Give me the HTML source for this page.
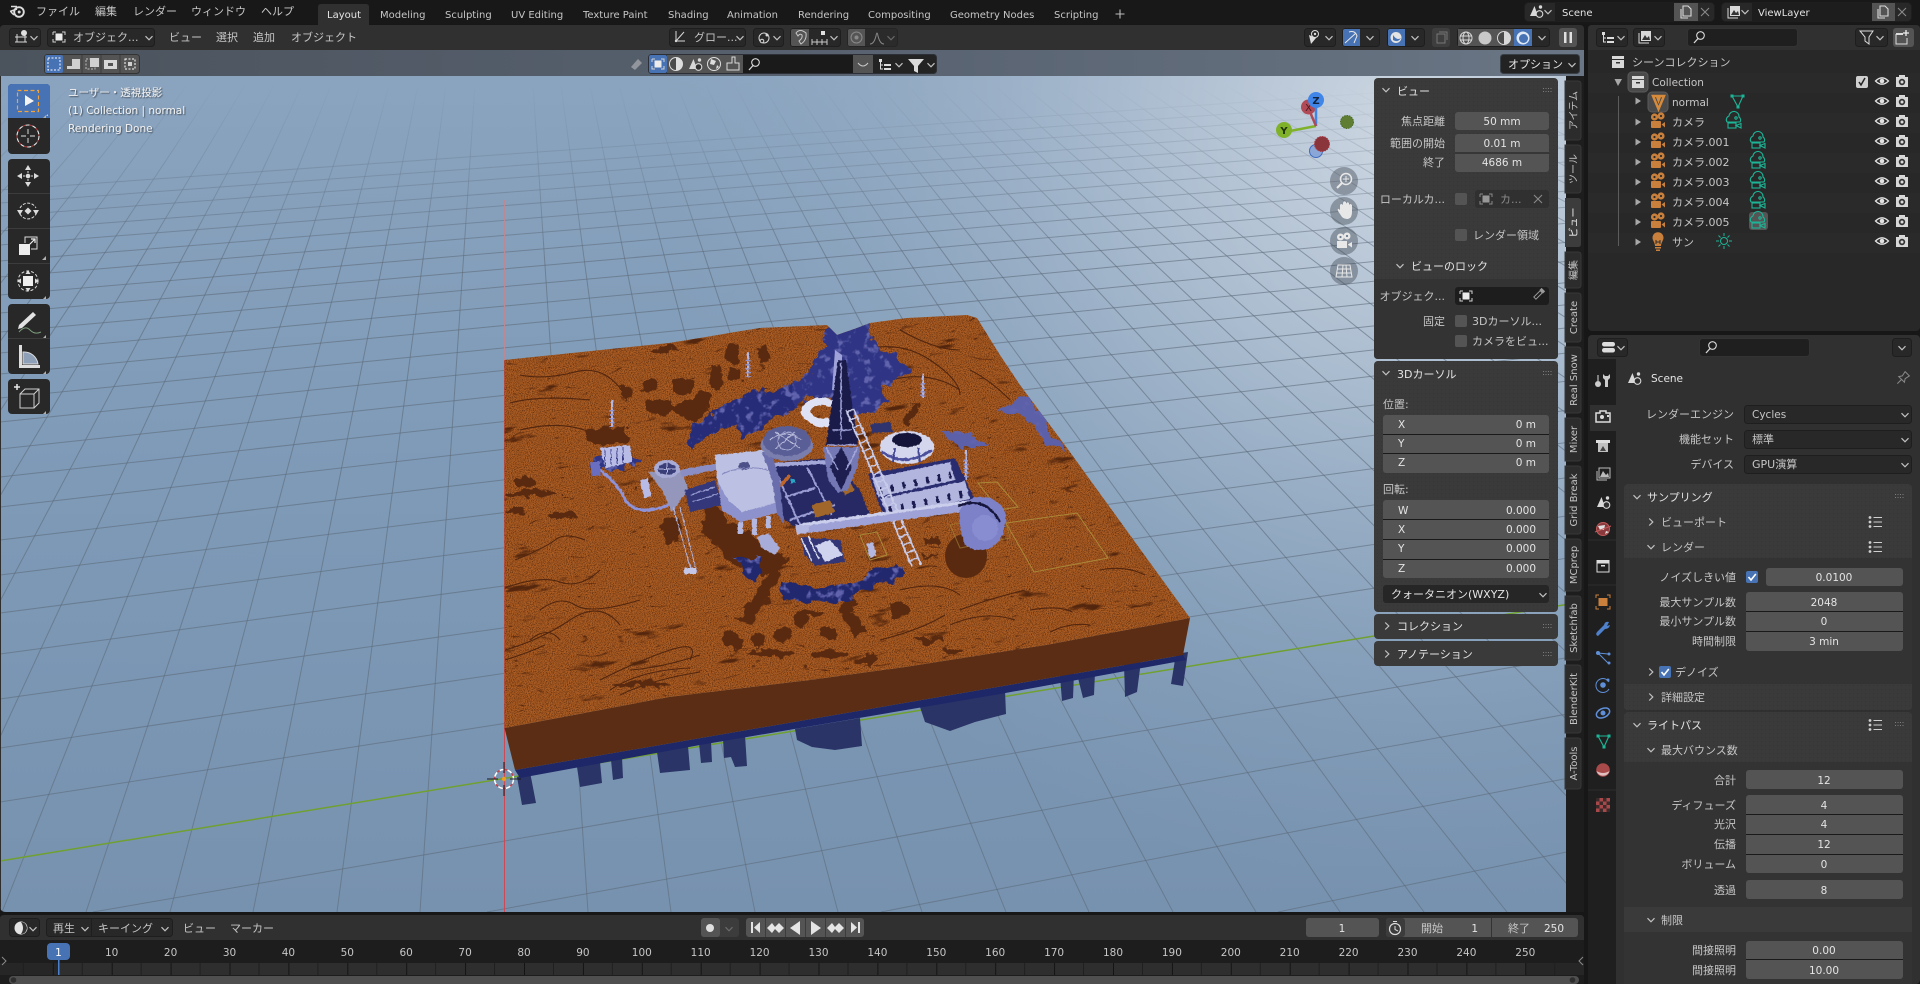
<!DOCTYPE html>
<html><head><meta charset="utf-8"><title>Blender</title>
<style>
html,body{margin:0;padding:0;background:#171717;width:1920px;height:984px;overflow:hidden}
svg{display:block}
text{font-family:"DejaVu Sans","Noto Sans CJK JP",sans-serif;font-size:11px;fill:#c6c6c6;white-space:pre}
.la{font-size:10px}
.n{font-size:10.5px}
.w{fill:#e4e4e4}
.e{text-anchor:end}
.c{text-anchor:middle}
.f{fill:#545454}
.d{fill:#282828;stroke:#1e1e1e}
.b{fill:#1d1d1d}
.cb{fill:#545454}
.vt{font-size:10px;fill:#c4c4c4;text-anchor:middle}
.ov{fill:#f0f0f0;font-size:10.5px}
.ln{stroke:#1a1a1a;stroke-width:1}
</style></head><body>
<svg width="1920" height="984" viewBox="0 0 1920 984" xmlns="http://www.w3.org/2000/svg">
<defs>
<linearGradient id="bg" x1="0" y1="0" x2="0" y2="1"><stop offset="0" stop-color="#8ba4bf"/><stop offset=".5" stop-color="#7e9ab7"/><stop offset="1" stop-color="#7792af"/></linearGradient>
<radialGradient id="gl" gradientUnits="userSpaceOnUse" cx="1420" cy="130" r="760"><stop offset="0" stop-color="#e4e8ee" stop-opacity=".78"/><stop offset=".35" stop-color="#d5dde6" stop-opacity=".47"/><stop offset=".7" stop-color="#b8c6d6" stop-opacity=".18"/><stop offset="1" stop-color="#a0b4ca" stop-opacity="0"/></radialGradient>
<linearGradient id="hdr" x1="0" y1="0" x2="1" y2="0"><stop offset="0" stop-color="#4b535d"/><stop offset=".55" stop-color="#586270"/><stop offset="1" stop-color="#6a7685"/></linearGradient>
<linearGradient id="fd" gradientUnits="userSpaceOnUse" x1="0" y1="85" x2="0" y2="260"><stop offset="0" stop-color="#000"/><stop offset="1" stop-color="#fff"/></linearGradient>
<mask id="fade" maskUnits="userSpaceOnUse" x="0" y="0" width="1600" height="920"><rect width="1600" height="920" fill="url(#fd)"/></mask>
<clipPath id="vp"><path d="M0,50H1584V912H6Q0,912 0,906Z"/></clipPath>
<clipPath id="ter"><path d="M504.500,360 669,343 700,338 735,332 760,328 827,325 837,335 857,328 870,323 907,318 967,315 977,318 1000,355 1020,385 1067,448 1190,618 1046,645 905,667 810,680 669,697 504.500,728Z"/></clipPath>
<filter id="ns" x="0" y="0" width="100%" height="100%" color-interpolation-filters="sRGB"><feTurbulence type="fractalNoise" baseFrequency="1.05" numOctaves="2" seed="4"/><feColorMatrix values="0 0 0 0 .2 0 0 0 0 .07 0 0 0 0 0 0 0 0 2.4 -1"/></filter>
<filter id="wr" x="0" y="0" width="100%" height="100%" color-interpolation-filters="sRGB"><feTurbulence type="fractalNoise" baseFrequency="0.02 0.08" numOctaves="4" seed="7"/><feColorMatrix values="0 0 0 0 .33 0 0 0 0 .15 0 0 0 0 .05 9 0 0 0 -6.2"/></filter>
<filter id="wl" x="0" y="0" width="100%" height="100%" color-interpolation-filters="sRGB"><feTurbulence type="turbulence" baseFrequency="0.014 0.05" numOctaves="3" seed="21"/><feColorMatrix values="0 0 0 0 .3 0 0 0 0 .13 0 0 0 0 .05 -16 0 0 0 1.15"/></filter>
<filter id="rg" x="-5%" y="-5%" width="110%" height="110%" color-interpolation-filters="sRGB"><feTurbulence type="fractalNoise" baseFrequency=".09" numOctaves="3" seed="5"/><feDisplacementMap in="SourceGraphic" scale="13" xChannelSelector="R" yChannelSelector="G"/></filter>
<filter id="pit" x="-10%" y="-10%" width="120%" height="120%" color-interpolation-filters="sRGB">
<feTurbulence type="fractalNoise" baseFrequency=".07" numOctaves="3" seed="3" result="t"/>
<feDisplacementMap in="SourceGraphic" in2="t" scale="16" xChannelSelector="R" yChannelSelector="G" result="d"/>
<feTurbulence type="fractalNoise" baseFrequency=".11" numOctaves="3" seed="9"/>
<feColorMatrix values="0 0 0 0 .38 0 0 0 0 .39 0 0 0 0 .68 6 0 0 0 -3.3" result="m"/>
<feComposite in="m" in2="d" operator="in" result="mm"/>
<feMerge><feMergeNode in="d"/><feMergeNode in="mm"/></feMerge>
</filter>
<filter id="r2" x="-3%" y="-3%" width="106%" height="106%" color-interpolation-filters="sRGB"><feTurbulence type="fractalNoise" baseFrequency=".3" numOctaves="2" seed="11"/><feDisplacementMap in="SourceGraphic" scale="2.500" xChannelSelector="R" yChannelSelector="G"/></filter>
<filter id="sh" x="-5%" y="-20%" width="110%" height="140%"><feDropShadow dx="1" dy="1" stdDeviation=".6" flood-color="#000" flood-opacity=".55"/></filter>
<pattern id="dot" width="4" height="4" patternUnits="userSpaceOnUse"><rect x="1" y="1" width="1" height="1" fill="#000" opacity=".09"/></pattern>
<pattern id="tk" x="52.8" y="0" width="58.9" height="12" patternUnits="userSpaceOnUse"><rect x="0" y="0" width="1" height="12" fill="#141414"/><rect x="29" y="0" width="1" height="12" fill="#1f1f1f"/></pattern>
<g id="chd"><path d="M-3.500,-1.800 L0,1.800 L3.500,-1.800" fill="none" stroke="#c2c2c2" stroke-width="1.200"/></g>
<g id="chr"><path d="M-1.800,-3.500 L1.800,0 L-1.800,3.500" fill="none" stroke="#c2c2c2" stroke-width="1.200"/></g>
<g id="tr"><path d="M-2.500,-3.500 L3,0 L-2.500,3.500Z" fill="#a8a8a8"/></g>
<g id="grip"><g fill="#7c7c7c"><rect x="-5" y="-2" width="1" height="1"/><rect x="-2.500" y="-2" width="1" height="1"/><rect x="0" y="-2" width="1" height="1"/><rect x="2.500" y="-2" width="1" height="1"/><rect x="-5" y="1" width="1" height="1"/><rect x="-2.500" y="1" width="1" height="1"/><rect x="0" y="1" width="1" height="1"/><rect x="2.500" y="1" width="1" height="1"/></g></g>
<g id="eye"><path d="M-6.500,0 Q0,-6.500 6.500,0 Q0,6.500 -6.500,0Z" fill="none" stroke="#e2e2e2" stroke-width="1.300"/><circle r="2.300" fill="#e2e2e2"/></g>
<g id="rc"><path d="M-3,-6H3V-4H6V6H-6V-4H-3Z" fill="#d8d8d8"/><circle r="3.200" cy="1" fill="#333"/><circle r="1.500" cy="1" fill="#d8d8d8"/></g>
<g id="oc"><circle cx="-3.500" cy="-4" r="3.600" fill="#c9803c"/><circle cx="3" cy="-5" r="3.600" fill="#c9803c"/><circle cx="-3.500" cy="-4" r="1.100" fill="#2c2c2c"/><circle cx="3" cy="-5" r="1.100" fill="#2c2c2c"/><rect x="-7" y="0" width="10" height="7" rx="1" fill="#c9803c"/><path d="M3.500,3.500 L7,1 V6.500Z" fill="#c9803c"/></g>
<g id="gc" fill="none" stroke="#1cb597" stroke-width="1.100"><path d="M-7,1 A4,4 0 0 1 -5,-5 A5,5 0 0 1 5,-4 A3.500,3.500 0 0 1 6,1Z"/><circle cx="2" cy="-3" r="1.200"/><rect x="-6" y="2" width="8" height="5"/><path d="M2,4.500 L7,2.500 V7 Z"/></g>
<g id="lst"><g fill="#d0d0d0"><circle cx="-6" cy="-4.500" r="1.400"/><circle cx="-6" cy="0" r="1.400"/><circle cx="-6" cy="4.500" r="1.400"/></g><path d="M-2.500,-4.500H6M-2.500,0H6M-2.500,4.500H6" stroke="#d0d0d0" stroke-width="1"/></g>
<g id="chk"><rect x="-6" y="-6" width="12" height="12" rx="2" fill="#4772b3"/><path d="M-3.500,0 L-1,3 L3.800,-3" fill="none" stroke="#fff" stroke-width="1.600"/></g>
<g id="scn"><path d="M-6,5 L-1.500,-5 L2,5Z" fill="#d8d8d8"/><circle cx="3.500" cy="3" r="3.300" fill="#303030" stroke="#d8d8d8" stroke-width="1.100"/><circle cx="4.500" cy="-4" r="1.700" fill="#d8d8d8"/></g>
<g id="bx"><path d="M-6,-5H-3M3,-5H6V-2M6,2V5H3M-3,5H-6V2M-6,-2V-5" fill="none" stroke="#d2d2d2" stroke-width="1"/><rect x="-3.500" y="-3.500" width="7" height="7" fill="#ececec"/></g>
<g id="col"><rect x="-6" y="-6" width="12" height="3" fill="#d8d8d8"/><rect x="-6" y="-2" width="12" height="8" fill="#d8d8d8"/><rect x="-2" y="0" width="4" height="1.500" fill="#333"/></g>
<g id="srch"><circle cx="1.500" cy="-1.500" r="3.800" fill="none" stroke="#d8d8d8" stroke-width="1.100"/><path d="M-1,1.500 L-5,6" stroke="#d8d8d8" stroke-width="1.300"/></g>
<g id="ol"><rect x="-6" y="-5" width="3" height="3" fill="#ddd"/><path d="M-4.500,-2V5H-2M-4.500,1H-2" stroke="#ddd" fill="none"/><rect x="-1" y="0" width="7" height="2" fill="#ddd"/><rect x="-1" y="4" width="7" height="2" fill="#ddd"/></g>
<g id="nm"><path d="M-5,-5H6L1,6Z" fill="none" stroke="#1cb597" stroke-width="1.100"/><rect x="-6.500" y="-6.500" width="3" height="3" fill="#1cb597"/><rect x="4.500" y="-6.500" width="3" height="3" fill="#1cb597"/><rect x="-.500" y="4.500" width="3" height="3" fill="#1cb597"/></g>
<g id="xx"><path d="M-4,-4L4,4M4,-4L-4,4" stroke="#8a8a8a" stroke-width="1.100"/></g>
<g id="cpy"><path d="M-3,-6H2L5,-3V4H-3Z M-5,-3V6H2" fill="none" stroke="#dadada" stroke-width="1.100"/></g>
</defs>

<rect width="1920" height="984" fill="#171717"/>

<!-- viewport -->
<g clip-path="url(#vp)">
<rect x="0" y="50" width="1584" height="862" fill="url(#bg)"/>
<rect x="0" y="50" width="1584" height="862" fill="url(#gl)"/>
<g mask="url(#fade)" fill="none" stroke="#5d6a79" stroke-opacity=".6" stroke-width="1">
<path d="M14,85 L-917,912 M43,85 L-834,912 M72,85 L-750,912 M101,85 L-666,912 M130,85 L-583,912 M158,85 L-499,912 M187,85 L-416,912 M216,85 L-332,912 M245,85 L-248,912 M274,85 L-165,912 M302,85 L-81,912 M331,85 L2,912 M360,85 L86,912 M389,85 L170,912 M418,85 L253,912 M446,85 L337,912 M475,85 L420,912"/>
<path d="M533,85 L588,912 M561,85 L671,912 M590,85 L755,912 M619,85 L838,912 M648,85 L922,912 M677,85 L1006,912 M706,85 L1089,912 M735,85 L1173,912 M763,85 L1256,912 M792,85 L1340,912 M821,85 L1424,912 M850,85 L1507,912 M879,85 L1591,912 M907,85 L1674,912 M936,85 L1758,912 M965,85 L1842,912 M994,85 L1925,912 M1023,85 L2009,912 M1052,85 L2093,912 M1081,85 L2176,912 M1110,85 L2260,912 M1139,85 L2343,912 M1168,85 L2427,912 M1196,85 L2511,912 M1225,85 L2594,912 M1254,85 L2678,912 M1283,85 L2761,912 M1312,85 L2845,912 M1341,85 L2929,912 M1370,85 L3012,912 M1399,85 L3096,912 M1427,85 L3179,912 M1456,85 L3263,912 M1485,85 L3347,912"/>
<path d="M1278,912L1600,845M881,912L1600,772M487,912L1600,708M93,912L1600,652M0,802L1600,553M0,748L1600,511M0,699L1600,473M0,654L1600,438M0,613L1600,406M0,575L1600,377M0,540L1600,349M0,507L1600,324M0,477L1600,301M0,449L1600,279M0,422L1600,258M0,398L1600,239M0,374L1600,220M0,353L1600,204M0,332L1600,188M0,313L1600,173M0,295L1600,159M0,277L1600,145M0,261L1600,132M0,245L1600,120M0,231L1600,109M0,216L1600,97M0,203L1600,87M0,190L1600,77"/>
</g>
<path d="M0,861 L1600,599" stroke="#70a030" stroke-width="1.500"/>
<path d="M504.500,200 V360" stroke="#b98a96" stroke-width="1"/>
<path d="M504.500,360 V912" stroke="#cc4a56" stroke-width="1"/>
<rect x="0" y="50" width="1" height="862" fill="#2e2e2e"/>
</g>

<!-- pillars -->
<g fill="#2a3466">
<path d="M517,777 L530,772 L536,803 L522,805Z"/>
<path d="M577,767 L600,762 L602,783 L580,787Z"/>
<path d="M611,760 L622,757 L623,778 L613,780Z"/>
<path d="M657,752 L688,746 L690,770 L660,773Z"/>
<path d="M699,743 L711,741 L712,762 L701,763Z"/>
<path d="M723,738 L745,735 L747,766 L735,767 L731,757 L724,758Z"/>
<path d="M795,729 L860,718 L862,746 L835,750 L812,747 L797,740Z"/>
<path d="M919,704 L1005,690 L1006,714 L975,722 L950,731 L925,722Z"/>
<path d="M1060,676 L1074,673 L1073,698 L1062,701Z"/>
<path d="M1077,674 L1095,672 L1094,695 L1083,698Z"/>
<path d="M1124,664 L1141,661 L1137,692 L1125,697Z"/>
<path d="M1176,654 L1188,652 L1183,686 L1171,684Z"/>
</g>
<path d="M515,770 L1183,655 L1186,660 L1000,694 L700,745 L520,778Z" fill="#1e2768"/>
<!-- terrain -->
<path d="M504.500,728 L669,697 810,680 905,667 1046,645 1190,618 1183,655 515,770Z" fill="#5b2d14"/>
<path d="M504.500,360 669,343 700,338 735,332 760,328 827,325 837,335 857,328 870,323 907,318 967,315 977,318 1000,355 1020,385 1067,448 1190,618 1046,645 905,667 810,680 669,697 504.500,728Z" fill="#ad5e24"/>
<g clip-path="url(#ter)">
<rect x="500" y="310" width="700" height="425" filter="url(#ns)" opacity=".75"/>
<rect x="470" y="300" width="760" height="450" filter="url(#wr)" transform="rotate(-8 840 520)"/>
<rect x="470" y="300" width="760" height="450" filter="url(#wl)" transform="rotate(-8 840 520)" opacity=".85"/>
<!-- wrinkles -->
<g fill="none" stroke="#52260f" stroke-width="1.100">
<path d="M520,375 Q545,380 575,372 T625,395"/><path d="M510,403 Q540,395 590,400"/><path d="M520,430 Q560,420 590,432"/><path d="M515,560 Q545,548 555,540 T585,540"/><path d="M505,588 Q540,575 560,582 T600,570"/>
<path d="M540,610 Q560,595 575,605 T640,600"/><path d="M505,650 Q540,640 570,620 T620,625"/><path d="M530,640 Q548,625 560,640"/><path d="M505,660 Q530,652 545,645"/><path d="M600,680 Q640,660 670,650 T690,660"/><path d="M610,690 Q640,670 690,668"/><path d="M620,695 Q650,680 700,672"/><path d="M630,670 Q660,668 700,655"/>
<path d="M860,350 Q900,340 930,360 T960,395"/><path d="M890,380 Q930,370 960,390"/><path d="M970,370 Q990,380 1010,400"/><path d="M900,330 Q935,350 960,350"/>
<path d="M960,610 Q985,600 1025,590"/><path d="M1030,610 Q1060,605 1072,612"/><path d="M1050,632 Q1070,622 1090,625"/><path d="M950,625 Q985,610 1015,620"/><path d="M900,590 Q940,580 960,595"/><path d="M880,640 Q920,630 945,615"/><path d="M1100,570 Q1125,565 1145,575"/>
</g>
<!-- blotches -->
<g fill="#5a2a10" filter="url(#rg)">
<ellipse cx="532" cy="493" rx="27" ry="4"/><ellipse cx="525" cy="482" rx="9" ry="5"/><ellipse cx="560" cy="515" rx="17" ry="3"/><ellipse cx="515" cy="511" rx="10" ry="2.500"/>
<ellipse cx="607" cy="436" rx="22" ry="9"/><ellipse cx="666" cy="349" rx="15" ry="3"/><ellipse cx="626" cy="393" rx="7" ry="8"/><ellipse cx="683" cy="387" rx="11" ry="8"/><ellipse cx="716" cy="377" rx="6" ry="14"/><ellipse cx="733" cy="353" rx="6" ry="10"/><ellipse cx="763" cy="353" rx="5" ry="9"/><ellipse cx="659" cy="407" rx="16" ry="7"/><ellipse cx="700" cy="400" rx="9" ry="10"/><ellipse cx="735" cy="375" rx="8" ry="6"/><ellipse cx="690" cy="410" rx="18" ry="10"/><ellipse cx="650" cy="385" rx="8" ry="6"/>
<ellipse cx="773" cy="653" rx="22" ry="4"/><ellipse cx="829" cy="655" rx="18" ry="5"/><ellipse cx="867" cy="660" rx="13" ry="5"/><ellipse cx="782" cy="633" rx="7" ry="10"/><ellipse cx="829" cy="633" rx="9" ry="7"/><ellipse cx="758" cy="640" rx="6" ry="8"/><ellipse cx="810" cy="613" rx="12" ry="3"/><ellipse cx="928" cy="640" rx="13" ry="3"/><ellipse cx="952" cy="650" rx="8" ry="3"/><ellipse cx="640" cy="685" rx="30" ry="3"/><ellipse cx="800" cy="620" rx="7" ry="7"/><ellipse cx="855" cy="620" rx="8" ry="5"/><ellipse cx="900" cy="610" rx="10" ry="7"/><ellipse cx="850" cy="605" rx="10" ry="6"/><ellipse cx="930" cy="555" rx="8" ry="2"/><ellipse cx="933" cy="541" rx="9" ry="3"/>
<path d="M707,497 L735,525 L760,540 L790,560 L770,575 L735,565 L715,545 L700,530Z"/>
<path d="M663,520 L680,515 L682,540 L664,545Z"/>
<path d="M773,567 L783,572 L752,625 L738,620Z"/>
<path d="M727,628 L745,640 L735,650 L722,640Z"/>
<path d="M844,600 L866,630 L858,640 L838,610Z"/>
<path d="M917,402 L921,404 L907,426 L902,424Z"/>
</g>
<ellipse cx="966" cy="556" rx="21" ry="22" fill="#5a2a10"/>
<!-- blue pits -->
<g filter="url(#pit)">
<path d="M825,328 870,322 868,335 880,348 912,368 900,378 880,387 890,402 877,412 857,415 840,408 833,398 813,398 790,405 787,395 797,382 810,372 817,358 823,345Z" fill="#2f3584"/>
<path d="M688,443 697,423 737,400 750,393 797,383 787,413 760,430 740,440 737,423 707,437 693,448Z" fill="#262c78"/>
<path d="M997,412 1030,395 1053,432 1067,452 1047,445 1030,425 1017,415Z" fill="#5c60a8"/>
<path d="M940,432 973,435 990,447 960,447Z" fill="#5c60a8"/>
<path d="M730,557 760,557 763,570 755,583Z" fill="#22286e"/>
<path d="M780,577 783,600 840,603 873,587 910,577 903,565 873,567 863,580 813,590 787,580Z" fill="#22286e"/>
<path d="M592,470 625,470 640,458 605,450 596,458Z" fill="#2f3584"/>
</g>
<path d="M835,350 842,355 842,392 832,390Z" fill="#9ea2d8"/>
<!-- outlines -->
<g fill="none" stroke="#a98838" stroke-width="1">
<path d="M1006,523 L1077,513 L1108,558 L1034,572Z"/><path d="M978,483 L997,482 L1018,507 L999,510Z"/><path d="M860,535 L877,532 L887,555 L870,560Z"/><path d="M950,525 L1004,516 L1010,538 L960,548Z" opacity=".6"/>
</g>
<g filter="url(#r2)">
<!-- pipe left -->
<path d="M593,467 Q605,470 622,493 Q628,510 645,510 T672,502" fill="none" stroke="#8e92d8" stroke-width="3"/>
<path d="M600,448 L630,445 L632,462 L605,468Z" fill="#b8bbe6"/>
<path d="M605,450V466M611,449V465M617,448V464M623,447V463" stroke="#3a3d86" stroke-width="1"/>
<path d="M590,462h10v14h-8Z" fill="#6a6ec0"/>
<!-- silo & funnel -->
<path d="M648,472 L682,470 L688,490 L672,512 L662,490Z" fill="#9496bc"/>
<ellipse cx="667" cy="469" rx="13" ry="9" fill="#a8abd6"/><ellipse cx="667" cy="469" rx="9" ry="6" fill="#3a3e78"/>
<path d="M667,463V475M658,469H676" stroke="#b9bce2"/>
<path d="M640,480 L648,478 L651,496 L644,498Z" fill="#b8bbe6"/>
<path d="M680,470 L718,463 L720,469 L682,477Z" fill="#8a8ec4"/>
<!-- machinery left -->
<path d="M685,490 L715,480 L722,505 L690,512Z" fill="#34387a"/>
<path d="M690,495L715,487M692,502L718,494" stroke="#9a9ed4"/>
<path d="M673,507 L692,573 M680,507 L697,573" stroke="#b0b3dc" stroke-width="1"/>
<rect x="684" y="568" width="12" height="6" fill="#c4c7e8"/>
<!-- middle machine -->
<path d="M773,463 L830,458 L860,490 L872,520 L800,530 L778,515Z" fill="#262964"/>
<path d="M770,465 L827,462" stroke="#a4a8d8" stroke-width="4"/>
<path d="M807,467 L832,515 M785,497 L815,488 M790,520 L835,505 M775,470 L800,525" stroke="#9a9ed4" stroke-width="2" fill="none"/>
<path d="M777,490 L790,475" stroke="#c0662a" stroke-width="3"/><rect x="791" y="479" width="4" height="4" fill="#2aa4c4"/>
<path d="M812,505 L830,500 L835,512 L815,518Z M840,470 L855,490 L845,495 L832,478Z" fill="#a0662a"/>
<!-- main block -->
<path d="M715,455 L765,450 L773,480 L777,513 L740,522 L723,510 L717,480Z" fill="#bcc0e2"/>
<path d="M717,480 L722,510 L740,522 L777,513 L776,503 L742,512 L728,500Z" fill="#8e92cc"/>
<path d="M762,452 L772,480 L777,513 L784,525 L780,480 L772,455Z" fill="#6a6eac"/>
<ellipse cx="744" cy="466" rx="6" ry="4" fill="#4c5088"/>
<path d="M722,474 Q745,464 768,470" stroke="#8488be" fill="none"/>
<path d="M738,522 h5 v12 h-5z M752,519 h5 v16 h-5z M766,516 h5 v12 h-5z" fill="#b4b8e0"/>
<path d="M757,537 L768,533 L780,548 L775,555 L762,548Z" fill="#a8acd8"/>
<!-- dome -->
<ellipse cx="787" cy="445" rx="26" ry="16" fill="#7a7eae"/>
<ellipse cx="787" cy="441" rx="24" ry="15" fill="#5a5e96"/>
<path d="M770,440 Q785,428 802,440 M775,449 L795,432M800,448 L775,432" stroke="#c0c3e0" fill="none"/>
<circle cx="787" cy="441" r="9" fill="none" stroke="#a8acd4"/>
<!-- ring white -->
<path d="M835,402 Q820,392 804,404 Q797,413 806,420 L815,426 Q827,430 832,424 L828,418 Q815,420 810,412 Q815,401 833,408Z" fill="#dfe1f4"/>
<!-- ring dark -->
<path d="M880,447 A27,16 0 0 1 934,447 A27,17 0 0 1 880,447Z" fill="#d4d6ee"/>
<ellipse cx="907" cy="440" rx="15" ry="7" fill="#14143a"/>
<path d="M882,452 Q905,468 932,450" stroke="#4b4f9c" stroke-width="2.500" fill="none"/><path d="M895,448 L893,462M918,448 L920,462" stroke="#3f4390" stroke-width="2"/>
<!-- tower -->
<path d="M823,447 L860,447 L858,465 L848,490 L838,493 L828,480Z" fill="#7478b4"/>
<path d="M838,360 L846,360 L858,445 L826,445Z" fill="#1b1b4a"/>
<path d="M841,447 L852,467 L841,490 L830,467Z" fill="#1e1e50"/>
<path d="M826,447 L838,470 M858,447 L846,470 M827,445 L857,445 M841,362 V440 M832,430 L852,430" stroke="#a0a4d8" stroke-width="1.500" fill="none"/>
<!-- fan slabs -->
<path d="M868,474 L955,458 L975,500 L885,520Z" fill="#2a2c70"/>
<path d="M872,478 L950,462 L955,480 L878,497Z" fill="#b2b5de"/>
<path d="M880,499 L965,481 L970,499 L888,516Z" fill="#b2b5de"/>
<path d="M879,491 L951,475" stroke="#1c1c50" stroke-width="7" stroke-dasharray="3 9"/>
<path d="M889,510 L967,493" stroke="#1c1c50" stroke-width="7" stroke-dasharray="3 9"/>
<!-- ladder -->
<path d="M846,410 L912,567 M854,410 L921,565" stroke="#c8cbea" stroke-width="1.800"/>
<path d="M850,410 L917,566" stroke="#c8cbea" stroke-width="8" stroke-dasharray="1.500 7" fill="none"/>
<!-- pipe -->
<path d="M800,529 L975,505" stroke="#9ea2d6" stroke-width="10"/>
<path d="M800,525 L975,501" stroke="#cccfec" stroke-width="3"/>
<path d="M795,525 L810,525 L808,532 L797,535Z" fill="#b4b8e0"/>
<!-- sphere -->
<path d="M960,510 A24,22 0 1 1 1004,528 A24,23 0 0 1 965,545 Q958,525 960,510Z" fill="#7d81c8"/>
<path d="M958,506 Q985,495 1000,522" stroke="#16163c" stroke-width="2.500" fill="none"/>
<circle cx="985" cy="528" r="13" fill="#9498da" opacity=".5"/>
<!-- lower machinery -->
<path d="M800,537 L840,540 L845,562 L815,566 L805,555Z" fill="#323676"/>
<path d="M815,545 L830,540 L843,555 L825,562Z" fill="#d0d3ee"/>
<path d="M801,538 L812,561 M808,536 L819,559" stroke="#dfe1f4" stroke-width="1.500"/>
<rect x="868" y="543" width="7" height="14" fill="#b4b8e0" transform="rotate(-15 871 550)"/>
<!-- small patch -->
<path d="M870,424 L890,422 L893,432 L872,433Z" fill="#30346e"/>
<!-- towers -->
<path d="M612,400 V427M748,352 V377M923,373 V398M966,450 V480" stroke="#b4b7e2" stroke-width="2"/>
<path d="M612,410 V427M748,360 V377M923,383 V398M966,460 V480" stroke="#8e92d0" stroke-width="5" stroke-dasharray="1.500 2.500"/>
</g>
</g>

<!-- 3D cursor -->
<g transform="translate(504,779)">
<circle r="9.500" fill="none" stroke="#fff" stroke-width="1.500" stroke-dasharray="5 3"/>
<circle r="9.500" fill="none" stroke="#c8404a" stroke-width="1.500" stroke-dasharray="3 5" stroke-dashoffset="-5"/>
<path d="M-17,0H-6M6,0H17M0,-17V-6M0,6V17" stroke="#1a1a1a" stroke-width="1"/>
<circle r="2.200" fill="#ef9c1f"/>
</g>

<!-- row 3 header -->
<rect x="0" y="50" width="1584" height="26" fill="url(#hdr)"/>
<!-- row2 header -->
<path d="M0,29 Q0,25 4,25 H1580 Q1584,25 1584,29 V50 H0Z" fill="#303030"/>

<!-- top bar -->
<rect x="0" y="0" width="1920" height="24" fill="#181818"/>
<g transform="translate(18,11)"><circle cx="1" cy="1" r="4.800" fill="none" stroke="#dcdcdc" stroke-width="1.900"/><circle cx="1.200" cy="1" r="1.500" fill="#dcdcdc"/><path d="M-1,-4.500 L-7,-4.500 M-1,-2 L-8,0.500 M-4,4 L-7,1" stroke="#dcdcdc" stroke-width="1.500"/></g>
<text x="36" y="15">ファイル</text><text x="95" y="15">編集</text><text x="133" y="15">レンダー</text><text x="191" y="15">ウィンドウ</text><text x="261" y="15">ヘルプ</text>
<path d="M318,25 V7 Q318,4 321,4 H366 Q369,4 369,7 V25Z" fill="#303030"/>
<text class="la w" x="327" y="18">Layout</text>
<text class="la" x="380" y="18">Modeling</text><text class="la" x="445" y="18">Sculpting</text><text class="la" x="511" y="18">UV Editing</text><text class="la" x="583" y="18">Texture Paint</text><text class="la" x="668" y="18">Shading</text><text class="la" x="727" y="18">Animation</text><text class="la" x="798" y="18">Rendering</text><text class="la" x="868" y="18">Compositing</text><text class="la" x="950" y="18">Geometry Nodes</text><text class="la" x="1054" y="18">Scripting</text>
<path d="M1120,9.500 V18.500 M1115.500,14 H1124.500" stroke="#bcbcbc" stroke-width="1.100"/>

<!-- scene selectors -->
<rect class="d" x="1524.500" y="2.500" width="190" height="19" rx="4"/>
<rect x="1555" y="3" width="119" height="18" fill="#1d1d1d"/>
<rect x="1674" y="3" width="24" height="18" fill="#545454"/>
<use href="#scn" x="1536" y="11"/><use href="#chd" x="1548" y="12"/>
<text class="la w" x="1562" y="16">Scene</text>
<use href="#cpy" x="1686" y="12"/><use href="#xx" x="1705" y="12"/>
<rect class="d" x="1721.500" y="2.500" width="190" height="19" rx="4"/>
<rect x="1752" y="3" width="120" height="18" fill="#1d1d1d"/>
<rect x="1872" y="3" width="23" height="18" fill="#545454"/>
<g transform="translate(1734,12)"><path d="M-4,-6H6V4H-4Z" fill="#d8d8d8"/><path d="M-6,-4V6H4" fill="none" stroke="#d8d8d8"/><path d="M-3,3L0,-2L2,1L4,-1L5,3Z" fill="#333"/></g><use href="#chd" x="1745" y="12"/>
<text class="la w" x="1758" y="16">ViewLayer</text>
<use href="#cpy" x="1883" y="12"/><use href="#xx" x="1902" y="12"/>

<!-- row 2 widgets -->
<rect class="d" x="9.500" y="28.500" width="31" height="18" rx="3"/>
<g transform="translate(22,38)"><path d="M-7,-1H5M-5,4V-4M3,4V-4M-7,4H5" stroke="#d8d8d8" fill="none"/><circle cx="2" cy="-5" r="3" fill="#e0e0e0"/></g><use href="#chd" x="34" y="38"/>
<rect class="d" x="47.500" y="28.500" width="107" height="18" rx="3"/>
<use href="#bx" x="59" y="37"/>
<text x="73" y="41">オブジェク...</text><use href="#chd" x="149" y="38"/>
<text x="169" y="41">ビュー</text><text x="216" y="41">選択</text><text x="253" y="41">追加</text><text x="291" y="41">オブジェクト</text>

<rect class="d" x="669.500" y="28.500" width="76" height="18" rx="3"/>
<g transform="translate(679,37)"><path d="M-3,-6V4H6M-3,4L5,-5" stroke="#d8d8d8" fill="none"/><circle cx="-3" cy="4" r="1.200" fill="#d8d8d8"/></g>
<text x="694" y="41">グロー...</text><use href="#chd" x="740" y="38"/>
<rect class="d" x="753.500" y="28.500" width="30" height="18" rx="3"/>
<g transform="translate(764,38)"><circle r="5" fill="none" stroke="#d8d8d8"/><circle cx="-2" cy="3" r="1.800" fill="#303030" stroke="#d8d8d8"/><circle cx="3" cy="-3" r="1.500" fill="#d8d8d8"/></g><use href="#chd" x="777" y="38"/>
<rect class="d" x="790.500" y="28.500" width="50" height="18" rx="3"/>
<path d="M793,29H809V46H793Q791,46 791,44V31Q791,29 793,29Z" fill="#545454"/>
<path d="M796,33 Q800,28 806,33 Q807,40 801,44 L799,41 Q803,38 802,35 Q800,33 798,36Z" fill="none" stroke="#c8c8c8"/>
<g transform="translate(819,38)"><rect x="2" y="-7" width="4" height="4" fill="#e0e0e0"/><path d="M-7,1V7M-2,1V7M3,1V7M8,1V7M-7,4H8" stroke="#c8c8c8"/></g><use href="#chd" x="834" y="38"/>
<rect class="d" x="847.500" y="28.500" width="50" height="18" rx="3" opacity=".6"/>
<path d="M850,29H865V46H850Q848,46 848,44V31Q848,29 850,29Z" fill="#555"/>
<circle cx="856.500" cy="37.500" r="5.500" fill="none" stroke="#8a8a8a"/><circle cx="856.500" cy="37.500" r="2" fill="#8a8a8a"/>
<path d="M870,44 Q874,44 876,36 Q877,30 878,36 Q880,44 884,44" fill="none" stroke="#8a8a8a"/><use href="#chd" x="891" y="38" opacity=".4"/>

<rect class="d" x="1304.500" y="28.500" width="31" height="18" rx="3"/>
<g transform="translate(1314,37)"><circle cx="1" cy="-3" r="3.500" fill="none" stroke="#ddd"/><circle cx="1" cy="-3" r="1.200" fill="#ddd"/><path d="M-5,-2 L2,1 L-3,7Z" fill="#ddd"/></g><use href="#chd" x="1329" y="38"/>
<rect class="d" x="1342.500" y="28.500" width="37" height="18" rx="3"/>
<path d="M1345,29H1360V46H1345Q1343,46 1343,44V31Q1343,29 1345,29Z" fill="#4772b3"/>
<path d="M1345,43 L1356,33 M1349,32 Q1355,30 1357,36 L1354,43" stroke="#e8e8e8" fill="none"/><use href="#chd" x="1370" y="38"/>
<rect class="d" x="1387.500" y="28.500" width="37" height="18" rx="3"/>
<path d="M1390,29H1405V46H1390Q1388,46 1388,44V31Q1388,29 1390,29Z" fill="#4772b3"/>
<circle cx="1396" cy="37.500" r="5.500" fill="#e4e4e4"/><path d="M1393,35Q1397,41 1401,38Q1398,43 1393,40Z" fill="#4772b3"/><use href="#chd" x="1415" y="38"/>
<rect x="1432" y="28" width="18" height="19" rx="3" fill="#3e3e3e"/><path d="M1437,34V43H1445V34ZM1439,32H1447V40" fill="none" stroke="#777"/>
<rect class="d" x="1457.500" y="28.500" width="92" height="18" rx="3"/>
<rect x="1476" y="29" width="19" height="17" fill="#545454"/><rect x="1495" y="29" width="19" height="17" fill="#545454"/><rect x="1458" y="29" width="18" height="17" fill="#545454"/>
<rect x="1514" y="29" width="18" height="17" fill="#4772b3"/>
<g transform="translate(1466,38)"><circle r="6" fill="none" stroke="#d8d8d8"/><ellipse rx="3" ry="6" fill="none" stroke="#d8d8d8"/><path d="M-6,-2H6M-6,2H6" stroke="#d8d8d8"/></g>
<circle cx="1485" cy="38" r="6.500" fill="#c8c8c8"/>
<g transform="translate(1504,38)"><circle r="6.500" fill="#4a4a4a" stroke="#d8d8d8"/><path d="M0,-6.500A6.500,6.500 0 0 1 0,6.500Z" fill="#d8d8d8"/></g>
<g transform="translate(1523,38)"><circle r="6.500" fill="#dfe8f5"/><circle cx=".5" cy=".5" r="4.500" fill="#4772b3"/></g>
<use href="#chd" x="1542" y="38"/>
<rect x="1559" y="28" width="18" height="19" rx="3" fill="#545454"/><rect x="1564" y="32" width="2.500" height="11" fill="#e0e0e0"/><rect x="1569.500" y="32" width="2.500" height="11" fill="#e0e0e0"/>

<!-- row3 widgets -->
<rect x="44.500" y="54.500" width="95" height="19" rx="3" fill="#545454" stroke="#333"/>
<rect x="45" y="55" width="18" height="18" rx="2" fill="#4772b3"/>
<g fill="none" stroke="#fff" stroke-dasharray="2 1.500"><rect x="48" y="58" width="12" height="12"/><rect x="86" y="59" width="9" height="10" stroke="#bbb"/><rect x="125" y="59" width="10" height="10"/></g>
<path d="M67,66 H72 V59 H80 V69 H67Z" fill="#d0d0d0"/>
<rect x="90" y="58" width="9" height="9" fill="#d0d0d0"/>
<path d="M104,60H117V69H104ZM108,63H113V66H108Z" fill="#d8d8d8" fill-rule="evenodd"/>
<rect x="128" y="62" width="4" height="4" fill="#d0d0d0"/>
<path d="M82,55V73M101,55V73M120,55V73" stroke="#3c3c3c"/>

<g transform="translate(637,64)" opacity=".6"><path d="M-6,3 L1,-5 L5,-1 L-2,6Z" fill="#bbb"/></g>
<rect x="648.500" y="54.500" width="288" height="19" rx="3" fill="#232323" stroke="#2c3036"/>
<rect x="649" y="55" width="18" height="18" rx="2" fill="#4772b3"/><rect x="667" y="55" width="19" height="18" fill="#545454"/><rect x="686" y="55" width="19" height="18" fill="#545454"/><rect x="705" y="55" width="19" height="18" fill="#545454"/><rect x="724" y="55" width="19" height="18" fill="#545454"/>
<use href="#bx" x="658" y="64"/>
<g transform="translate(676,64)"><circle r="6.500" fill="#4a4a4a" stroke="#ddd"/><path d="M0,-6.500A6.500,6.500 0 0 1 0,6.500Z" fill="#ddd"/></g>
<use href="#scn" x="695" y="64"/>
<g transform="translate(714,64)"><circle r="6.500" fill="#555" stroke="#ddd"/><path d="M-3,-5 L2,-3 L0,1 L-4,0Z M3,1 L5,3 L2,5Z" fill="#ddd"/></g>
<g transform="translate(733,64)"><path d="M-1,-7H2V-1H6V6H-6V-1H-1Z" fill="none" stroke="#ddd"/></g>
<rect x="743" y="55" width="110" height="18" fill="#1a1a1a"/><use href="#srch" x="754" y="64"/>
<rect x="853" y="55" width="20" height="18" fill="#545454"/><path d="M858,63 Q863,69 868,63" fill="none" stroke="#c8c8c8"/>
<use href="#ol" x="885" y="64"/><use href="#chd" x="899" y="65"/>
<path d="M908,59H924L918,66V73L914,71V66Z" fill="#dadada"/><use href="#chd" x="931" y="65"/>
<rect x="1500.500" y="54.500" width="79" height="19" rx="3" fill="#232323" stroke="#3a3f46"/>
<text x="1508" y="68" class="w">オプション</text><use href="#chd" x="1572" y="65"/>

<!-- overlay text -->
<g filter="url(#sh)">
<text class="ov" x="68" y="96">ユーザー・透視投影</text>
<text class="ov" x="68" y="114">(1) Collection | normal</text>
<text class="ov" x="68" y="132">Rendering Done</text>
</g>

<!-- left toolbar -->
<g>
<rect x="8" y="84" width="42" height="70" rx="4" fill="#282828"/>
<path d="M8,118 V88 Q8,84 12,84 H46 Q50,84 50,88 V118Z" fill="#4772b3"/>
<rect x="17.500" y="90.500" width="21" height="21" fill="none" stroke="#f2a33c" stroke-width="1.200" stroke-dasharray="4 2.500"/>
<path d="M25,95 L34,101 L25,106Z" fill="#f4f4f4"/>
<path d="M48,114V116H46Z" fill="#c8c8c8"/>
<g transform="translate(28,136)"><circle r="11" fill="none" stroke="#e8e8e8" stroke-width="1.100" stroke-dasharray="4 3"/><circle r="11" fill="none" stroke="#b03c3c" stroke-width="1.100" stroke-dasharray="3 4" stroke-dashoffset="-4"/><path d="M-7,0H-2M2,0H7M0,-7V-2M0,2V7" stroke="#bbb" stroke-width="1.200"/></g>
<rect x="8" y="159" width="42" height="140" rx="4" fill="#282828"/>
<path d="M8,193.500H50M8,228.500H50M8,263.500H50" stroke="#3c3c3c"/>
<g transform="translate(28,176)" fill="#dcdcdc"><path d="M0,-11 L3,-6 H-3Z M0,11 L3,6 H-3Z M-11,0 L-6,3 V-3Z M11,0 L6,3 V-3Z"/><circle r="2.300"/><path d="M0,-5V-3M0,3V5M-5,0H-3M3,0H5" stroke="#dcdcdc"/></g>
<g transform="translate(28,211)"><path d="M-8,-3 A9,9 0 0 1 8,-3 M-8,3 A9,9 0 0 0 8,3" fill="none" stroke="#dcdcdc" stroke-dasharray="3 1.500"/><path d="M-11,-1 H-5 L-8,4Z M11,-1 H5 L8,4Z" fill="#dcdcdc"/><rect x="-2.500" y="-2.500" width="5" height="5" transform="rotate(45)" fill="#dcdcdc"/></g>
<g transform="translate(28,246)"><rect x="-9" y="-2" width="11" height="11" fill="#ececec"/><path d="M-3,-3 V-9 H9 V3 H3" fill="none" stroke="#ddd"/><path d="M1,-1 L7,-7 M3,-7H7V-3" fill="none" stroke="#eee" stroke-width="1.200"/></g>
<g transform="translate(28,281)"><circle r="10" fill="none" stroke="#dcdcdc" stroke-dasharray="3 2"/><rect x="-5" y="-5" width="10" height="10" fill="#eee"/><path d="M0,-11 L2.500,-7 H-2.500Z M0,11 L2.500,7 H-2.500Z M-11,0 L-7,2.500 V-2.500Z M11,0 L7,2.500 V-2.500Z" fill="#dcdcdc"/></g>
<path d="M46,256V260H42ZM46,115V118H43Z" fill="#b0b0b0"/>
<rect x="8" y="304" width="42" height="70" rx="4" fill="#282828"/>
<path d="M8,338.500H50" stroke="#3c3c3c"/>
<g transform="translate(25,320)"><path d="M8,-8 L11,-5 L-3,8 L-7,9 L-6,5Z" fill="#e2e2e2"/></g>
<path d="M19,332 Q25,325 30,330 T41,332" fill="none" stroke="#7a9a7a"/>
<g transform="translate(28,357)"><rect x="-9" y="-12" width="3" height="22" fill="#ddd"/><rect x="-9" y="8" width="21" height="3" fill="#ddd"/><path d="M-5,-5 A14,14 0 0 1 10,7 H-5Z" fill="#8da0b8" stroke="#ddd"/></g>
<rect x="8" y="379" width="42" height="35" rx="4" fill="#282828"/>
<g transform="translate(29,398)"><path d="M-9,-4H5V10H-9ZM-9,-4L-4,-9H10V5L5,10M5,-4L10,-9" fill="none" stroke="#d0d0d0"/><path d="M-12,-14V-8M-15,-11H-9" stroke="#e8e8e8" stroke-width="1.500"/></g>
<path d="M46,371V374H43ZM46,411V414H43Z" fill="#b0b0b0"/>
<path d="M46,296V299H43Z" fill="#b0b0b0"/><path d="M46,335V338H43Z" fill="#b0b0b0"/>
</g>

<!-- gizmo -->
<g>
<circle cx="1308.500" cy="107" r="7.500" fill="#b04a56"/><text x="1308.500" y="111" class="c" style="font-size:10px;fill:#4a1a1f">X</text>
<path d="M1316,126 V106" stroke="#3f86e8" stroke-width="2.500"/><path d="M1316,126 L1290,131" stroke="#7fb22a" stroke-width="2.500"/><path d="M1316,126 L1310,112" stroke="#b04a56" stroke-width="2.500"/>
<circle cx="1316" cy="100" r="8" fill="#3f86e8"/><text x="1316" y="104" class="c" style="font-size:10px;fill:#12223f;font-weight:bold">Z</text>
<circle cx="1284" cy="130" r="8" fill="#7fb22a"/><text x="1284" y="134" class="c" style="font-size:10px;fill:#20300a;font-weight:bold">Y</text>
<circle cx="1347" cy="122" r="6.500" fill="#5f7e34" stroke="#496b24" stroke-dasharray="1.500 1"/>
<circle cx="1316" cy="151" r="6.500" fill="#8aa7d8" stroke="#3f6bc0"/>
<circle cx="1322" cy="144" r="7.500" fill="#8a343c" stroke="#a43e48" stroke-dasharray="1.500 1"/>
</g>
<!-- nav buttons -->
<g fill="#39424c" fill-opacity=".4"><circle cx="1344" cy="181" r="14"/><circle cx="1344" cy="211" r="14"/><circle cx="1344" cy="241" r="14"/><circle cx="1344" cy="271" r="14"/></g>
<g transform="translate(1345,180)"><circle cx="1" cy="-1" r="5.500" fill="none" stroke="#e8e8e8" stroke-width="1.500"/><path d="M-3,3 L-8,8" stroke="#e8e8e8" stroke-width="2"/><path d="M1,-4V2M-2,-1H4" stroke="#e8e8e8"/></g>
<path d="M1338,211 L1342,217 Q1344,219 1348,219 Q1352,218 1352,212 V205 Q1350,203 1349,205 V203 Q1347,201 1346,204 V202 Q1344,200 1343,203 V205 Q1341,203 1340,205 V210 Q1337,207 1338,211Z" fill="#e8e8e8"/>
<g transform="translate(1344,241)"><circle cx="-3.500" cy="-4" r="3.500" fill="#e8e8e8"/><circle cx="3" cy="-5" r="3.500" fill="#e8e8e8"/><circle cx="-3.500" cy="-4" r="1.100" fill="#6a7a8c"/><circle cx="3" cy="-5" r="1.100" fill="#6a7a8c"/><rect x="-7" y="0" width="10" height="7" fill="#e8e8e8"/><path d="M3.500,3.500 L8,1 V6.500Z" fill="#e8e8e8"/></g>
<path d="M1338,265 H1350 L1352,277 H1336Z M1343,265 L1342,277 M1346,265 L1347,277 M1337,269 H1351 M1336.500,273 H1351.500" fill="none" stroke="#e8e8e8"/>

<!-- N tab bar -->
<rect x="1566" y="76" width="18" height="836" fill="#1d1d1d"/>
<g fill="#2c2c2c" stroke="#383838" stroke-width="1">
<path d="M1565,81H1578Q1581,81 1581,84V137Q1581,140 1578,140H1565Z"/>
<path d="M1565,145H1578Q1581,145 1581,148V190Q1581,193 1578,193H1565Z"/>
<path d="M1565,252H1578Q1581,252 1581,255V285Q1581,288 1578,288H1565Z"/>
<path d="M1565,293H1578Q1581,293 1581,296V339Q1581,342 1578,342H1565Z"/>
<path d="M1565,347H1578Q1581,347 1581,350V410Q1581,413 1578,413H1565Z"/>
<path d="M1565,418H1578Q1581,418 1581,421V458Q1581,461 1578,461H1565Z"/>
<path d="M1565,466H1578Q1581,466 1581,469V531Q1581,534 1578,534H1565Z"/>
<path d="M1565,539H1578Q1581,539 1581,542V588Q1581,591 1578,591H1565Z"/>
<path d="M1565,596H1578Q1581,596 1581,599V657Q1581,660 1578,660H1565Z"/>
<path d="M1565,665H1578Q1581,665 1581,668V730Q1581,733 1578,733H1565Z"/>
<path d="M1565,738H1578Q1581,738 1581,741V786Q1581,789 1578,789H1565Z"/>
</g>
<path d="M1565,198H1578Q1581,198 1581,201V244Q1581,247 1578,247H1565Z" fill="#3c3c3c"/>
<text class="vt" transform="translate(1577,110.500) rotate(-90)">アイテム</text>
<text class="vt" transform="translate(1577,169) rotate(-90)">ツール</text>
<text class="vt" transform="translate(1577,222.500) rotate(-90)" style="fill:#eee">ビュー</text>
<text class="vt" transform="translate(1577,270) rotate(-90)">編集</text>
<text class="vt" transform="translate(1577,317.500) rotate(-90)">Create</text>
<text class="vt" transform="translate(1577,380) rotate(-90)">Real Snow</text>
<text class="vt" transform="translate(1577,439.500) rotate(-90)">Mixer</text>
<text class="vt" transform="translate(1577,500) rotate(-90)">Grid Break</text>
<text class="vt" transform="translate(1577,565) rotate(-90)">MCprep</text>
<text class="vt" transform="translate(1577,628) rotate(-90)">Sketchfab</text>
<text class="vt" transform="translate(1577,699) rotate(-90)">BlenderKit</text>
<text class="vt" transform="translate(1577,763.500) rotate(-90)">A-Tools</text>

<!-- N panel -->
<rect x="1374" y="78" width="184" height="281" rx="4" fill="#3a3a3a"/>
<path d="M1374,279H1558V355Q1558,359 1554,359H1378Q1374,359 1374,355Z" fill="#333"/>
<rect x="1374" y="78" width="184" height="201" rx="4" fill="url(#dot)"/>
<use href="#chd" x="1386" y="90"/><text x="1397" y="95" class="w">ビュー</text><use href="#grip" x="1548" y="90"/>
<text class="e" x="1445" y="125">焦点距離</text>
<rect class="f" x="1455" y="112" width="94" height="18" rx="3"/><text class="c n w" x="1502" y="125">50 mm</text>
<text class="e" x="1445" y="147">範囲の開始</text><text class="e" x="1445" y="166">終了</text>
<rect class="f" x="1455" y="134" width="94" height="38" rx="3"/><path d="M1455,153H1549" class="ln"/>
<text class="c n w" x="1502" y="147">0.01 m</text><text class="c n w" x="1502" y="166">4686 m</text>
<text class="e" x="1445" y="203">ローカルカ...</text>
<rect class="cb" x="1455" y="193" width="12" height="12" rx="2"/>
<rect x="1475" y="190" width="74" height="18" rx="3" fill="#303030"/>
<g opacity=".55"><use href="#bx" x="1486" y="199"/></g>
<text x="1500" y="203" style="fill:#8a8a8a">カ...</text><use href="#xx" x="1538" y="199"/>
<rect class="cb" x="1455" y="229" width="12" height="12" rx="2"/><text x="1473" y="239">レンダー領域</text>
<use href="#chd" x="1400" y="266"/><text x="1411" y="270" class="w">ビューのロック</text>
<text class="e" x="1445" y="300">オブジェク...</text>
<rect class="b" x="1455" y="287" width="94" height="18" rx="3"/><use href="#bx" x="1466" y="296"/>
<g transform="translate(1537,296) rotate(45)"><rect x="-1.500" y="-6" width="3" height="9" fill="none" stroke="#9a9a9a"/><rect x="-2.500" y="-9" width="5" height="3" fill="#9a9a9a"/></g>
<text class="e" x="1445" y="325">固定</text>
<rect class="cb" x="1455" y="315" width="12" height="12" rx="2"/><text x="1472" y="325">3Dカーソル...</text>
<rect class="cb" x="1455" y="335" width="12" height="12" rx="2"/><text x="1472" y="345">カメラをビュ...</text>

<rect x="1374" y="361" width="184" height="251" rx="4" fill="#3a3a3a"/><rect x="1374" y="361" width="184" height="251" rx="4" fill="url(#dot)"/>
<use href="#chd" x="1386" y="373"/><text x="1397" y="378" class="w">3Dカーソル</text><use href="#grip" x="1548" y="373"/>
<text x="1383" y="408">位置:</text>
<rect class="f" x="1383" y="415" width="166" height="58" rx="3"/><path d="M1383,434.500H1549M1383,453.500H1549" class="ln"/>
<text x="1398" y="428" class="n w">X</text><text x="1398" y="447" class="n w">Y</text><text x="1398" y="466" class="n w">Z</text>
<text x="1536" y="428" class="n w e">0 m</text><text x="1536" y="447" class="n w e">0 m</text><text x="1536" y="466" class="n w e">0 m</text>
<text x="1383" y="493">回転:</text>
<rect class="f" x="1383" y="500" width="166" height="78" rx="3"/><path d="M1383,519.500H1549M1383,539.500H1549M1383,559.500H1549" class="ln"/>
<text x="1398" y="514" class="n w">W</text><text x="1398" y="533" class="n w">X</text><text x="1398" y="552" class="n w">Y</text><text x="1398" y="572" class="n w">Z</text>
<text x="1536" y="514" class="n w e">0.000</text><text x="1536" y="533" class="n w e">0.000</text><text x="1536" y="552" class="n w e">0.000</text><text x="1536" y="572" class="n w e">0.000</text>
<rect class="b" x="1383" y="585" width="166" height="18" rx="3" style="fill:#262626"/><text x="1391" y="598" class="w">クォータニオン(WXYZ)</text><use href="#chd" x="1543" y="595"/>

<rect x="1374" y="614" width="184" height="25" rx="4" fill="#3a3a3a"/><use href="#chr" x="1387" y="626"/><text x="1397" y="630" class="w">コレクション</text><use href="#grip" x="1548" y="626"/>
<rect x="1374" y="641" width="184" height="25" rx="4" fill="#3a3a3a"/><use href="#chr" x="1387" y="654"/><text x="1397" y="658" class="w">アノテーション</text><use href="#grip" x="1548" y="654"/>

<!-- outliner -->
<rect x="1588" y="25" width="332" height="306" rx="4" fill="#282828"/>
<path d="M1588,50V29Q1588,25 1592,25H1916Q1920,25 1920,29V50Z" fill="#303030"/>
<rect class="d" x="1596.500" y="28.500" width="31" height="18" rx="3"/><use href="#ol" x="1608" y="37"/><use href="#chd" x="1621" y="38"/>
<rect class="d" x="1633.500" y="28.500" width="31" height="18" rx="3"/><g transform="translate(1645,37)"><path d="M-4,-6H6V4H-4Z" fill="#d8d8d8"/><path d="M-6,-4V6H4" fill="none" stroke="#d8d8d8"/><path d="M-3,3L0,-2L2,1L4,-1L5,3Z" fill="#333"/></g><use href="#chd" x="1658" y="38"/>
<rect x="1687.500" y="28.500" width="110" height="18" rx="3" fill="#1f1f1f" stroke="#333"/><use href="#srch" x="1699" y="37"/>
<rect class="d" x="1855.500" y="28.500" width="32" height="18" rx="3"/><path d="M1860,31H1873L1869,37V44L1865,41V37Z" fill="none" stroke="#ddd"/><use href="#chd" x="1880" y="38"/>
<rect x="1893" y="28" width="21" height="19" rx="3" fill="#545454"/><g transform="translate(1902,37)"><path d="M-6,-3H0M-6,-3V7H5V1" fill="none" stroke="#ddd"/><path d="M-6,-3H1" stroke="#ddd" stroke-width="2"/><path d="M4,-7V-1M1,-4H7" stroke="#eee" stroke-width="1.300"/></g>

<rect x="1588" y="73" width="332" height="20" fill="#2b2b2b" opacity=".6"/>
<rect x="1588" y="113" width="332" height="20" fill="#2b2b2b" opacity=".5"/>
<rect x="1588" y="153" width="332" height="20" fill="#2b2b2b" opacity=".5"/>
<rect x="1588" y="193" width="332" height="20" fill="#2b2b2b" opacity=".5"/>
<rect x="1588" y="233" width="332" height="20" fill="#2b2b2b" opacity=".5"/>
<use href="#col" x="1618" y="62"/><text x="1632" y="66">シーンコレクション</text>
<path d="M1614.500,79 L1622,79 L1618,86Z" fill="#a8a8a8"/>
<rect x="1628" y="72" width="20" height="20" rx="4" fill="#4a4a4a" stroke="#5a5a5a"/>
<use href="#col" x="1638" y="82"/><text class="la" x="1652" y="86" style="font-size:10.500px">Collection</text>
<rect x="1856" y="76" width="12" height="12" rx="2" fill="#d0d0d0"/><path d="M1859,82 L1861,85 L1865,78" fill="none" stroke="#222" stroke-width="1.500"/>
<path d="M1618.500,96V246" stroke="#5c5c5c"/>
<use href="#tr" x="1638" y="101"/><use href="#tr" x="1638" y="122"/><use href="#tr" x="1638" y="142"/><use href="#tr" x="1638" y="162"/><use href="#tr" x="1638" y="182"/><use href="#tr" x="1638" y="202"/><use href="#tr" x="1638" y="222"/><use href="#tr" x="1638" y="242"/>
<rect x="1648" y="92" width="20" height="20" rx="4" fill="#4a4a4a" stroke="#5a5a5a"/>
<path d="M1653,96H1664L1658.500,109Z" fill="none" stroke="#d68a3c" stroke-width="2.500"/><path d="M1656,97H1661L1658.500,104Z" fill="#d68a3c"/>
<text class="la" x="1672" y="106" style="font-size:10.500px">normal</text><use href="#nm" x="1737" y="101"/>
<use href="#oc" x="1658" y="121"/><text x="1672" y="126">カメラ</text><use href="#gc" x="1734" y="121"/>
<use href="#oc" x="1658" y="141"/><text x="1672" y="146">カメラ.001</text><use href="#gc" x="1758" y="141"/>
<use href="#oc" x="1658" y="161"/><text x="1672" y="166">カメラ.002</text><use href="#gc" x="1758" y="161"/>
<use href="#oc" x="1658" y="181"/><text x="1672" y="186">カメラ.003</text><use href="#gc" x="1758" y="181"/>
<use href="#oc" x="1658" y="201"/><text x="1672" y="206">カメラ.004</text><use href="#gc" x="1758" y="201"/>
<use href="#oc" x="1658" y="221"/><text x="1672" y="226">カメラ.005</text><rect x="1749" y="212" width="19" height="18" rx="3" fill="#555"/><use href="#gc" x="1758" y="221"/>
<g transform="translate(1658,242)"><path d="M-5,-2 A5.500,5.500 0 1 1 5,-2 Q3,2 3,4H-3Q-3,2 -5,-2Z" fill="#c9803c"/><rect x="-3" y="5" width="6" height="1.500" fill="#c9803c"/><rect x="-2" y="7.500" width="4" height="1.500" fill="#c9803c"/><path d="M-2,-2V2M2,-2V2M-2,0H2" stroke="#2c2c2c"/></g>
<text x="1672" y="246">サン</text>
<g transform="translate(1724,241)" stroke="#1cb597" fill="none"><circle r="3.500"/><path d="M0,-8V-5M0,5V8M-8,0H-5M5,0H8M-5.500,-5.500L-3.500,-3.500M3.500,3.500L5.500,5.500M-5.500,5.500L-3.500,3.500M3.500,-3.500L5.500,-5.500"/></g>
<use href="#eye" x="1882" y="81"/><use href="#rc" x="1902" y="81"/>
<use href="#eye" x="1882" y="101"/><use href="#rc" x="1902" y="101"/>
<use href="#eye" x="1882" y="121"/><use href="#rc" x="1902" y="121"/>
<use href="#eye" x="1882" y="141"/><use href="#rc" x="1902" y="141"/>
<use href="#eye" x="1882" y="161"/><use href="#rc" x="1902" y="161"/>
<use href="#eye" x="1882" y="181"/><use href="#rc" x="1902" y="181"/>
<use href="#eye" x="1882" y="201"/><use href="#rc" x="1902" y="201"/>
<use href="#eye" x="1882" y="221"/><use href="#rc" x="1902" y="221"/>
<use href="#eye" x="1882" y="241"/><use href="#rc" x="1902" y="241"/>

<!-- properties -->
<rect x="1588" y="335" width="332" height="649" rx="4" fill="#303030"/>
<rect x="1588" y="359" width="28" height="625" fill="#1f1f1f"/>
<rect class="d" x="1597.500" y="338.500" width="30" height="18" rx="3"/>
<g transform="translate(1608,347)"><rect x="-6" y="-5" width="13" height="4.500" rx="2.200" fill="#ddd"/><rect x="-6" y="1" width="13" height="4.500" rx="2.200" fill="#ddd"/></g><use href="#chd" x="1621" y="348"/>
<rect x="1699.500" y="338.500" width="110" height="18" rx="3" fill="#1f1f1f" stroke="#333"/><use href="#srch" x="1711" y="347"/>
<rect class="d" x="1892.500" y="338.500" width="19" height="18" rx="3"/><use href="#chd" x="1902" y="348"/>
<path d="M1590,405H1616V431H1590Z" fill="#303030"/>
<g transform="translate(1603,381)"><path d="M-5,-6V0" stroke="#ddd"/><circle cx="-5" cy="3" r="3" fill="#ccc"/><path d="M0,-7 L2,-5 H5 L7,-7 V-3 L5,-1 V6 H2 V-1 L0,-3Z" fill="#ccc"/></g>
<g transform="translate(1603,417)"><path d="M-7,-4H-3V-6H3V-4H7V5H-7Z" fill="none" stroke="#ddd" stroke-width="1.500"/><circle r="2" fill="#ddd" cy="0" cx="-1"/><rect x="4" y="-2" width="2" height="2" fill="#ddd"/></g>
<g transform="translate(1603,446)"><rect x="-7" y="-6" width="14" height="3" fill="#ddd"/><rect x="-5" y="-3" width="10" height="9" fill="#c0c0c0"/><path d="M-3,5 L0,0 L3,5Z" fill="#444"/></g>
<g transform="translate(1603,474)"><path d="M-4,-6H7V4H-4Z" fill="none" stroke="#bbb"/><path d="M-6,-3V6H4" fill="none" stroke="#bbb"/><path d="M-3,3L0,-3L3,1L5,-1L6,3Z" fill="#bbb"/></g>
<use href="#scn" x="1603" y="502"/>
<g transform="translate(1603,529)"><circle r="6.500" fill="#8a3a3c" stroke="#c05a5a"/><path d="M-5,-3 L2,-4 L1,1 L-3,1Z M3,2 L6,3 L2,5Z" fill="#e0e0e0"/><path d="M-8,3 L8,-3" stroke="#c05a5a"/></g>
<path d="M1588,540H1616M1588,585H1616M1588,790H1616" stroke="#2e2e2e"/>
<g transform="translate(1603,566)"><rect x="-6.500" y="-6" width="13" height="3" fill="#ddd"/><rect x="-6" y="-3" width="12" height="9" fill="none" stroke="#ddd"/><rect x="-2" y="-1" width="4" height="1.500" fill="#ddd"/></g>
<g transform="translate(1603,602)"><path d="M-7,-4V-7H-4M4,-7H7V-4M7,4V7H4M-4,7H-7V4" fill="none" stroke="#c9803c"/><rect x="-4.500" y="-4" width="9" height="8" fill="#c9803c"/></g>
<g transform="translate(1603,629)"><path d="M6,-7 Q2,-8 1,-4 L-6,3 Q-8,6 -5,7 L2,0 Q6,0 7,-4 L4,-3Z" fill="#4f80cc"/></g>
<g transform="translate(1603,658)"><path d="M-5,-5L5,-4M-5,-5L5,5" stroke="#5f8fd8"/><circle cx="-5" cy="-5" r="2" fill="#5f8fd8"/><circle cx="6" cy="-4" r="1.500" fill="#5f8fd8"/><circle cx="6" cy="5" r="1.500" fill="#5f8fd8"/></g>
<g transform="translate(1603,685)"><circle r="2.800" fill="#5f8fd8"/><path d="M6,-3 A7,7 0 1 0 6,4" fill="none" stroke="#5f8fd8"/><circle cx="5" cy="-5" r="1.500" fill="#5f8fd8"/></g>
<g transform="translate(1603,713)"><ellipse rx="7" ry="4.500" transform="rotate(-25)" fill="none" stroke="#5f8fd8" stroke-width="1.500"/><circle r="2.500" fill="#5f8fd8"/></g>
<use href="#nm" x="1603" y="741"/>
<g transform="translate(1603,770)"><circle r="6.800" fill="#a94a4a"/><path d="M-6.500,1 Q0,5 6.500,1 A6.800,6.800 0 0 1 -6.500,1Z" fill="#e0c0c0"/></g>
<g transform="translate(1603,805)"><rect x="-7" y="-7" width="14" height="14" fill="#a8484a"/><path d="M-7,-7h3.500v3.500h-3.500zM0,-7h3.500v3.500h-3.500zM-3.500,-3.500h3.500v3.500h-3.500zM3.500,-3.500h3.500v3.500h-3.500zM-7,0h3.500v3.500h-3.500zM0,0h3.500v3.500h-3.500zM-3.500,3.500h3.500v3.500h-3.500zM3.500,3.500h3.500v3.500h-3.500z" fill="#3a2a2a"/></g>

<use href="#scn" x="1634" y="378"/><text class="la w" x="1651" y="382" style="font-size:10.500px">Scene</text>
<g transform="translate(1903,378) rotate(45)"><path d="M-3,-6H3L2,-1L4,2H-4L-2,-1ZM0,2V8" fill="none" stroke="#8a8a8a"/></g>
<text class="e" x="1734" y="418">レンダーエンジン</text><rect class="d" x="1744.500" y="405.500" width="167" height="18" rx="3"/><text x="1752" y="418" class="n">Cycles</text><use href="#chd" x="1905" y="415"/>
<text class="e" x="1734" y="443">機能セット</text><rect class="d" x="1744.500" y="430.500" width="167" height="18" rx="3"/><text x="1752" y="443">標準</text><use href="#chd" x="1905" y="440"/>
<text class="e" x="1734" y="468">デバイス</text><rect class="d" x="1744.500" y="455.500" width="167" height="18" rx="3"/><text x="1752" y="468">GPU演算</text><use href="#chd" x="1905" y="465"/>

<rect x="1624" y="484" width="288" height="226" rx="4" fill="#3a3a3a"/><rect x="1624" y="484" width="288" height="74" fill="url(#dot)"/>
<rect x="1624" y="558" width="288" height="126" fill="#333"/>
<rect x="1624" y="684" width="288" height="26" rx="3" fill="#3a3a3a"/><rect x="1624" y="684" width="288" height="26" rx="3" fill="url(#dot)"/>
<use href="#chd" x="1637" y="497"/><text x="1647" y="501" class="w">サンプリング</text><use href="#grip" x="1900" y="496"/>
<use href="#chr" x="1651" y="522"/><text x="1661" y="526">ビューポート</text><use href="#lst" x="1876" y="522"/>
<use href="#chd" x="1651" y="547"/><text x="1661" y="551">レンダー</text><use href="#lst" x="1876" y="547"/>
<text class="e" x="1736" y="581">ノイズしきい値</text><use href="#chk" x="1752" y="577"/>
<rect class="f" x="1766" y="568" width="137" height="18" rx="3"/><text class="c n w" x="1834" y="581">0.0100</text>
<rect class="f" x="1746" y="592" width="157" height="59" rx="3"/><path d="M1746,611.500H1903M1746,631.500H1903" class="ln"/>
<text class="e" x="1736" y="606">最大サンプル数</text><text class="c n w" x="1824" y="606">2048</text>
<text class="e" x="1736" y="625">最小サンプル数</text><text class="c n w" x="1824" y="625">0</text>
<text class="e" x="1736" y="645">時間制限</text><text class="c n w" x="1824" y="645">3 min</text>
<use href="#chr" x="1651" y="672"/><use href="#chk" x="1665" y="672"/><text x="1675" y="676">デノイズ</text>
<use href="#chr" x="1651" y="697"/><text x="1661" y="701">詳細設定</text>

<path d="M1624,984V716Q1624,712 1628,712H1908Q1912,712 1912,716V984Z" fill="#3a3a3a"/>
<rect x="1624" y="712" width="288" height="50" fill="url(#dot)"/>
<rect x="1624" y="762" width="288" height="145" fill="#333"/>
<rect x="1624" y="932" width="288" height="52" fill="#333"/>
<use href="#chd" x="1637" y="725"/><text x="1647" y="729" class="w">ライトパス</text><use href="#lst" x="1876" y="725"/><use href="#grip" x="1900" y="724"/>
<use href="#chd" x="1651" y="750"/><text x="1661" y="754">最大バウンス数</text>
<text class="e" x="1736" y="784">合計</text><rect class="f" x="1746" y="770" width="157" height="19" rx="3"/><text class="c n w" x="1824" y="784">12</text>
<rect class="f" x="1746" y="795" width="157" height="78" rx="3"/><path d="M1746,814.500H1903M1746,834.500H1903M1746,854.500H1903" class="ln"/>
<text class="e" x="1736" y="809">ディフューズ</text><text class="c n w" x="1824" y="809">4</text>
<text class="e" x="1736" y="828">光沢</text><text class="c n w" x="1824" y="828">4</text>
<text class="e" x="1736" y="848">伝播</text><text class="c n w" x="1824" y="848">12</text>
<text class="e" x="1736" y="868">ボリューム</text><text class="c n w" x="1824" y="868">0</text>
<text class="e" x="1736" y="894">透過</text><rect class="f" x="1746" y="880" width="157" height="19" rx="3"/><text class="c n w" x="1824" y="894">8</text>
<use href="#chd" x="1651" y="920"/><text x="1661" y="924">制限</text>
<rect class="f" x="1746" y="941" width="157" height="38" rx="3"/><path d="M1746,959.500H1903" class="ln"/>
<text class="e" x="1736" y="954">間接照明</text><text class="c n w" x="1824" y="954">0.00</text>
<text class="e" x="1736" y="974">間接照明</text><text class="c n w" x="1824" y="974">10.00</text>

<!-- timeline -->
<path d="M0,984V919Q0,915 4,915H1580Q1584,915 1584,919V984Z" fill="#1d1d1d"/>
<path d="M0,940V919Q0,915 4,915H1580Q1584,915 1584,919V940Z" fill="#303030"/>
<rect class="d" x="9.500" y="918.500" width="30" height="18" rx="3"/>
<g transform="translate(21,928)"><circle r="6.500" fill="#e4e4e4"/><path d="M0,-6 Q4,0 0,6 Q5,6 6,0 Q5,-6 0,-6Z" fill="#333"/></g><use href="#chd" x="33" y="929"/>
<rect class="d" x="46.500" y="918.500" width="126" height="18" rx="3"/><path d="M91.500,919V936" stroke="#1e1e1e"/>
<text x="53" y="932">再生</text><use href="#chd" x="85" y="929"/>
<text x="98" y="932">キーイング</text><use href="#chd" x="165" y="929"/>
<text x="183" y="932">ビュー</text><text x="230" y="932">マーカー</text>
<rect x="701" y="918" width="38" height="19" rx="3" fill="#3c3c3c"/><rect x="701" y="918" width="19" height="19" rx="3" fill="#545454"/><circle cx="710" cy="928" r="4" fill="#e0e0e0"/><use href="#chd" x="729" y="929" opacity=".35"/>
<rect x="746" y="918" width="118" height="19" rx="3" fill="#545454"/>
<path d="M765.500,918V937M785.500,918V937M805.500,918V937M825.500,918V937M845.500,918V937" stroke="#3c3c3c"/>
<g fill="#e4e4e4"><rect x="751" y="922" width="2" height="11"/><path d="M760,922V933L754,927.500Z"/><path d="M767,928L772,923 L775,927 L779,923 L784,928 L779,933 L775,929 L772,933Z"/><path d="M800,921V935L790,928Z"/><path d="M811,921V935L821,928Z"/><path d="M827,928L832,923 L835,927 L839,923 L844,928 L839,933 L835,929 L832,933Z"/><path d="M851,922V933L857,927.500Z"/><rect x="858" y="922" width="2" height="11"/></g>
<rect class="f" x="1306" y="918" width="73" height="19" rx="3"/><text class="c n w" x="1342" y="932">1</text>
<rect x="1386" y="918" width="192" height="19" rx="3" fill="#545454"/><rect x="1386" y="918" width="19" height="19" rx="3" fill="#3c3c3c"/><path d="M1491.500,918V937" stroke="#333"/>
<g transform="translate(1395,928)"><circle r="5.500" fill="none" stroke="#ddd" stroke-width="1.200" cy="1"/><path d="M0,-2V1.500L3,3M-2,-6.500H2" stroke="#ddd" fill="none"/></g>
<text x="1421" y="932">開始</text><text class="n w e" x="1478" y="932">1</text><text x="1508" y="932">終了</text><text class="n w e" x="1564" y="932">250</text>
<!-- ruler -->
<rect x="0" y="940" width="1584" height="23" fill="#1d1d1d"/>
<rect x="0" y="963" width="1584" height="12" fill="#262626"/>
<rect x="59" y="963" width="1466" height="12" fill="#2e2e2e"/>
<rect x="0" y="963" width="1584" height="12" fill="url(#tk)"/>
<rect x="0" y="975" width="1584" height="9" fill="#1d1d1d"/>
<rect x="9" y="976" width="1570" height="8" rx="4" fill="#4f4f4f"/>
<circle cx="13.500" cy="980" r="2.800" fill="#2e2e2e"/><circle cx="1572.500" cy="980" r="2.800" fill="#2e2e2e"/>
<text class="c n" x="111.700" y="956">10</text><text class="c n" x="170.600" y="956">20</text><text class="c n" x="229.500" y="956">30</text><text class="c n" x="288.400" y="956">40</text><text class="c n" x="347.300" y="956">50</text><text class="c n" x="406.200" y="956">60</text><text class="c n" x="465.100" y="956">70</text><text class="c n" x="524" y="956">80</text><text class="c n" x="582.900" y="956">90</text><text class="c n" x="641.800" y="956">100</text><text class="c n" x="700.700" y="956">110</text><text class="c n" x="759.600" y="956">120</text><text class="c n" x="818.500" y="956">130</text><text class="c n" x="877.400" y="956">140</text><text class="c n" x="936.300" y="956">150</text><text class="c n" x="995.200" y="956">160</text><text class="c n" x="1054.100" y="956">170</text><text class="c n" x="1113" y="956">180</text><text class="c n" x="1171.900" y="956">190</text><text class="c n" x="1230.800" y="956">200</text><text class="c n" x="1289.700" y="956">210</text><text class="c n" x="1348.600" y="956">220</text><text class="c n" x="1407.500" y="956">230</text><text class="c n" x="1466.400" y="956">240</text><text class="c n" x="1525.300" y="956">250</text>
<rect x="58" y="955" width="1.500" height="20" fill="#4a80cc"/>
<rect x="47" y="943" width="23" height="17" rx="4" fill="#4772b3"/><text class="c n" x="58.500" y="956" style="fill:#fff">1</text>
<path d="M2,957 L6,961 L2,965" fill="none" stroke="#8a8a8a"/>
<path d="M1583,957 L1579,961 L1583,965" fill="none" stroke="#8a8a8a"/>
</svg>
</body></html>
